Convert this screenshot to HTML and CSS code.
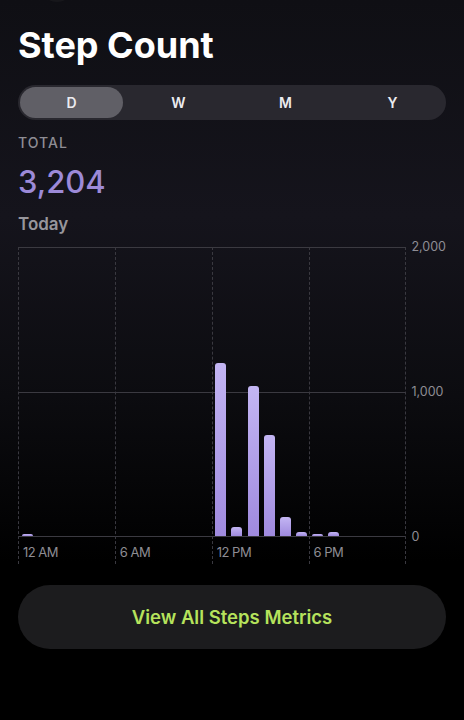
FILE: index.html
```html
<!DOCTYPE html>
<html lang="en">
<head>
    <meta charset="UTF-8" />
    <title>Step Count</title>
    <link rel="stylesheet" href="styles.css">
</head>
<body>
<div class="top-bar"><span class="back-btn"></span></div>

<h1>Step Count</h1>

<div class="segments">
    <div class="seg active">D</div>
    <div class="seg">W</div>
    <div class="seg">M</div>
    <div class="seg">Y</div>
</div>

<div class="total-label">TOTAL</div>
<div class="total-value">3,204</div>
<div class="period">Today</div>

<div class="chart">
    <div class="cols" id="cols"></div>
    <div class="yaxis">
        <span>2,000</span>
        <span>1,000</span>
        <span>0</span>
    </div>
</div>

<button class="metrics-btn">View All Steps Metrics</button>

<script>
    // steps per hour, 0..23
    const hours = [10, 0, 0, 0, 0, 0, 0, 0, 0, 0, 0, 0,
                   1193, 62, 1034, 697, 131, 28, 14, 28, 0, 0, 0, 0];
    const labels = ["12 AM", "6 AM", "12 PM", "6 PM"];
    const maxSteps = 2000;
    const plotHeight = 290;

    const cols = document.getElementById("cols");
    for (let c = 0; c < 4; c++) {
        const col = document.createElement("div");
        col.className = "col";

        const plot = document.createElement("div");
        plot.className = "plot";
        for (let h = c * 6; h < c * 6 + 6; h++) {
            const slot = document.createElement("div");
            slot.className = "slot";
            if (hours[h] > 0) {
                const bar = document.createElement("div");
                bar.className = "bar";
                bar.style.height = Math.max(2, hours[h] / maxSteps * plotHeight) + "px";
                slot.appendChild(bar);
            }
            plot.appendChild(slot);
        }

        const label = document.createElement("div");
        label.className = "xlabel";
        label.textContent = labels[c];

        col.appendChild(plot);
        col.appendChild(label);
        cols.appendChild(col);
    }
</script>
</body>
</html>
```

FILE: styles.css
```css
html {
    background: #000;
}
body {
    font-family: Inter, "Noto Sans", sans-serif;
    background: linear-gradient(180deg, #0f0f14 0%, #15141c 30%, #0c0c10 55%, #000 78%);
    color: #fff;
    margin: 0;
    padding: 0 18px;
    width: 428px;
    height: 720px;
    overflow: hidden;
}
.top-bar {
    height: 3px;
    overflow: hidden;
    padding-left: 22px;
}
.back-btn {
    display: block;
    width: 34px;
    height: 34px;
    margin-top: -32px;
    border-radius: 50%;
    background: #17171b;
}
h1 {
    font-size: 36px;
    font-weight: 700;
    line-height: 42px;
    margin: 21px 0 0;
}
.segments {
    display: grid;
    grid-template-columns: repeat(4, 1fr);
    gap: 4px;
    margin-top: 19px;
    height: 35px;
    padding: 2px;
    box-sizing: border-box;
    background: #29282f;
    border-radius: 18px;
}
.seg {
    display: flex;
    align-items: center;
    justify-content: center;
    font-size: 14px;
    font-weight: 600;
    color: #ececf0;
    border-radius: 16px;
}
.seg.active {
    background: #605f66;
}
.total-label {
    margin-top: 14px;
    font-size: 14px;
    line-height: 17px;
    font-weight: 500;
    letter-spacing: 1px;
    color: #8e8d94;
}
.total-value {
    margin-top: 12px;
    font-size: 31px;
    line-height: 37px;
    font-weight: 500;
    color: #9c8ad8;
}
.period {
    margin-top: 14px;
    font-size: 17px;
    line-height: 20px;
    font-weight: 600;
    color: #97969c;
}
.chart {
    display: flex;
    margin-top: 13px;
}
.cols {
    display: flex;
    width: 389px;
}
.col {
    flex: 1;
    border-left: 1px dashed #3a3940;
    height: 317px;
}
.col:last-child {
    border-right: 1px dashed #3a3940;
}
.plot {
    height: 290px;
    display: flex;
    align-items: flex-end;
    border-top: 1px solid #3b3a41;
    border-bottom: 1px solid #3b3a41;
    box-sizing: border-box;
    background: linear-gradient(#3b3a41, #3b3a41) 0 144px / 100% 1px no-repeat;
    margin-right: -1px;
}
.col:last-child .plot {
    margin-right: 0;
}
.slot {
    flex: 1;
    display: flex;
    justify-content: center;
    align-items: flex-end;
}
.bar {
    width: 11px;
    border-radius: 3px 3px 0 0;
    background: linear-gradient(180deg, #c3b5f3 0%, #9f8ade 100%);
}
.xlabel {
    padding: 7px 0 0 4px;
    font-size: 13px;
    line-height: 16px;
    color: #8e8d94;
    letter-spacing: -0.5px;
}
.yaxis {
    height: 290px;
    display: flex;
    flex-direction: column;
    justify-content: space-between;
    padding-left: 5px;
}
.yaxis span {
    font-size: 12.5px;
    line-height: 14px;
    margin: -7px 0;
    color: #8e8d94;
}
.metrics-btn {
    display: block;
    width: 100%;
    height: 64px;
    margin-top: 21px;
    border: none;
    border-radius: 32px;
    background: #1c1c1e;
    color: #b6e35c;
    font-family: Inter, "Noto Sans", sans-serif;
    font-size: 18.5px;
    font-weight: 600;
    cursor: pointer;
}
```
